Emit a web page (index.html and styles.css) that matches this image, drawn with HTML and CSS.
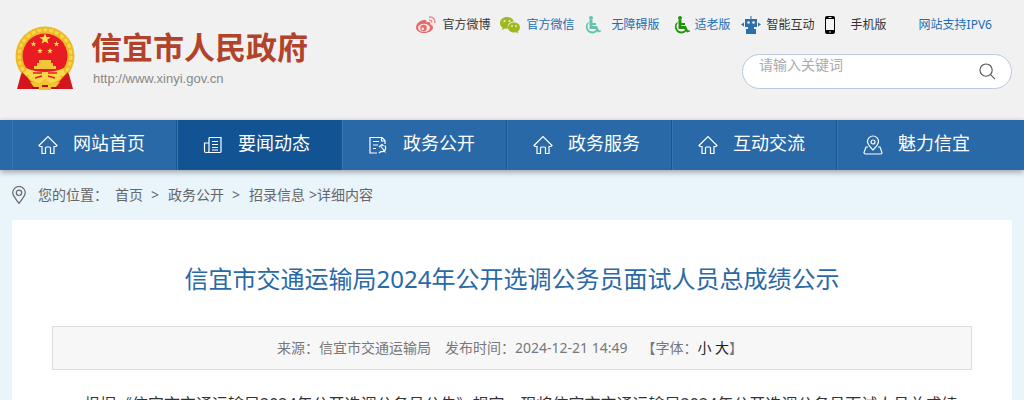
FILE: index.html
```html
<!DOCTYPE html>
<html lang="zh-CN">
<head>
<meta charset="utf-8">
<title>信宜市人民政府</title>
<link rel="stylesheet" href="styles.css">
</head>
<body>
<svg class="defs" aria-hidden="true">
  <symbol id="house" viewBox="0 0 20 20"><path d="M1 10.500 10 1.500l9 9-1 1H16V18.500h-3.500V13q0-1-1-1h-3q-1 0-1 1v5.500H4V11.500H2z"/></symbol>
  <symbol id="star" viewBox="-10 -10 20 20"><path d="M0-10 2.300-3.200 9.500-3.100 3.800 1.200 5.900 8.100 0 4-5.900 8.100-3.800 1.200-9.500-3.100-2.300-3.200z"/></symbol>
  <symbol id="wheelchair" viewBox="0 0 16 18"><circle cx="6" cy="2" r="2"/><path d="M4.500 4h3v3H11v2H7.500v1H12l2 4.500 1.500-.5.5 1.500-3 1L10.500 13H4.500z"/><path d="M3.500 7.500a5 5 0 1 0 8 6l1 1.500A6.500 6.500 0 1 1 3.500 5.800z"/></symbol>
</svg>
<header class="header">
  <div class="wrap head-row">
    <a class="brand" href="#">
      <svg class="emblem" viewBox="0 0 60 66" aria-hidden="true">
        <path d="M8 42 2 64h56l-6-22z" fill="#cf1720"/>
        <circle cx="30" cy="31" r="29.500" fill="#edb92b"/>
        <circle cx="30" cy="31" r="26" fill="none" stroke="#f9d943" stroke-width="3" stroke-dasharray="4 2"/>
        <path d="M7 47l5 5 4 5-1 7H7l1-4zM53 47l-5 5-4 5 1 7h8l-1-4z" fill="#d5151d"/>
        <circle cx="30" cy="31" r="22.500" fill="#e81c22"/>
        <g fill="#ffe14b"><use href="#star" x="24" y="8" width="12" height="12"/><use href="#star" x="15.500" y="16" width="6" height="6"/><use href="#star" x="38.500" y="16" width="6" height="6"/><use href="#star" x="22" y="23" width="6" height="6"/><use href="#star" x="32" y="23" width="6" height="6"/></g>
        <path d="M24 35h12v3h2v3h3v3H19v-3h3v-3h2z" fill="#f2c53a"/>
        <path d="M11 43q9 4 19 4t19-4v6l-8 4 3 2-8 3-6-4-6 4-8-3 3-2-8-4z" fill="#f9d94a"/>
        <path d="M18 48h9M33 48h9M20 53l7-2M40 53l-7-2" stroke="#e81c22" stroke-width="1.500"/>
        <path d="M15 57l10 1 5-4 5 4 10-1-4 5h-5v3H24v-3h-5z" fill="#f4c334"/>
        <path d="M17 63h6M37 63h6M27 61h6" stroke="#b70f17" stroke-width="2"/>
      </svg>
      <span class="brand-text"><strong class="brand-name">信宜市人民政府</strong><span class="brand-url">http://www.xinyi.gov.cn</span></span>
    </a>
    <div class="tools">
      <nav class="links" aria-label="快捷链接">
        <a class="link social" href="#"><svg class="ic20" viewBox="0 0 20 18" aria-hidden="true"><path d="M8 4C4 4 0 8 0 11.500 0 15 4 17 8 17c5 0 9-2.500 9-5.500 0-2-1.500-2.500-2.500-3 .5-2-1-3-4-2C11 4.500 10 4 8 4z" fill="#e66a69"/><ellipse cx="8" cy="11.800" rx="6" ry="4" fill="#f8e7e5"/><circle cx="7.500" cy="12" r="3.200" fill="#e66a69"/><circle cx="6.800" cy="12.700" r="1.200" fill="#fff"/><path d="M13 1.200c4-.8 6.500 2.300 5.600 6M13 4.200c2-.3 3 1 2.600 2.500" fill="none" stroke="#e88987" stroke-width="1.400"/></svg>官方微博</a>
        <a class="link social blue" href="#"><svg class="ic20" viewBox="0 0 20 18" aria-hidden="true"><path d="M7 1C3 1 0 3.500 0 7c0 2 1 3.500 2.500 4.500L2 14l3-1.500 3 .3C7 8 10 5.500 14 5.500 13 2.500 10 1 7 1z" fill="#9fba20"/><path d="M14 6.500c-3.500 0-6 2-6 5s3 5 6 5l2-.3 2 1.300-.3-2C19 14.500 20 13 20 11.500c0-3-2.500-5-6-5z" fill="#9fba20"/><g fill="#edf2cf"><circle cx="4.500" cy="5" r="1"/><circle cx="9.500" cy="5" r="1"/><circle cx="12" cy="10" r=".9"/><circle cx="16" cy="10" r=".9"/></g></svg>官方微信</a>
        <a class="link blue access" href="#"><svg class="ic16" fill="#62c3b0" aria-hidden="true"><use href="#wheelchair"/></svg>无障碍版</a>
        <a class="link blue elder" href="#"><svg class="ic16" fill="#1f9408" aria-hidden="true"><use href="#wheelchair"/></svg>适老版</a>
        <a class="link robot" href="#"><svg class="ic20" viewBox="0 0 20 18" fill="#2d6fab" aria-hidden="true"><path d="M9.500 0h1v3H16v8h-3v2h2v5H5v-5h2v-2H4V3h5.500zM0 8.500l3-2v4zM20 8.500l-3-2v4z"/><g fill="#f1f1f1"><circle cx="7.500" cy="6.500" r="1.300"/><circle cx="12.500" cy="6.500" r="1.300"/></g></svg>智能互动</a>
        <a class="link phone" href="#"><svg class="ic10" viewBox="0 0 10 18" aria-hidden="true"><rect width="10" height="18" rx="2"/><path d="M1 3h8v11H1z" fill="#f4f4f4"/><path d="M3.500 1.500h3M4 16h2" stroke="#ddd"/></svg>手机版</a>
        <a class="link blue ipv6" href="#">网站支持IPV6</a>
      </nav>
      <form class="search">
        <input class="search-input" type="text" aria-label="请输入关键词" placeholder="请输入关键词">
        <button class="search-btn" type="button" aria-label="搜索"><svg class="search-icon" viewBox="0 0 18 18" aria-hidden="true"><circle cx="7.500" cy="7.500" r="6.500"/><path d="m12 12 5 5"/></svg></button>
      </form>
    </div>
  </div>
</header>
<nav class="nav" aria-label="主导航">
  <div class="wrap nav-row">
    <a class="tab" href="#"><svg class="nav-icon" aria-hidden="true"><use href="#house"/></svg>网站首页</a>
    <a class="tab active" href="#"><svg class="nav-icon" viewBox="0 0 20 20" aria-hidden="true"><path d="M6 2.500h12v14q0 1-1 1H3q-1.500 0-1.500-1.500V8H6M6 2.500V16q0 1.500-1.500 1.500M9 6.500h6M9 9.500h6M9 12.500h6M9 15h6"/></svg>要闻动态</a>
    <a class="tab" href="#"><svg class="nav-icon" viewBox="0 0 20 20" aria-hidden="true"><path d="M9 18H2V2.500h12l3 3V9M13.500 3v3H17M5 6.500h6M5 10h5M5 13.500h3M11 12l3-2.500 1.500 1.500M13 11.500l4.500 6M17 10.500c2 4-1 7-4 6l-2 1.500"/></svg>政务公开</a>
    <a class="tab" href="#"><svg class="nav-icon" aria-hidden="true"><use href="#house"/></svg>政务服务</a>
    <a class="tab" href="#"><svg class="nav-icon" aria-hidden="true"><use href="#house"/></svg>互动交流</a>
    <a class="tab" href="#"><svg class="nav-icon" viewBox="0 0 20 20" aria-hidden="true"><path d="M10 15C6.500 11.500 4.500 9.500 4.500 6.500a5.500 5.500 0 0 1 11 0c0 3-2 5-5.500 8.500zM5 12H3l-2 5.500q0 1.500 1.500 1.500h15q1.500 0 1.500-1.500L17 12h-2"/><circle cx="10" cy="7" r="2"/></svg>魅力信宜</a>
  </div>
</nav>
<main class="wrap">
  <div class="crumbs">
    <svg class="pin" viewBox="0 0 14 18" aria-hidden="true"><path d="M7 17.300C3 12 .7 9.500.7 6.800a6.300 6.300 0 0 1 12.600 0C13.300 9.500 11 12 7 17.300z"/><circle cx="7" cy="6.800" r="2.700"/></svg>
    <span class="where">您的位置：</span>
    <a href="#">首页</a><span class="sep">&gt;</span><a href="#">政务公开</a><span class="sep">&gt;</span><a href="#">招录信息</a><span class="last">&gt;详细内容</span>
  </div>
  <article class="article">
    <h1 class="title">信宜市交通运输局2024年公开选调公务员面试人员总成绩公示</h1>
    <div class="meta"><span>来源：信宜市交通运输局</span><span>发布时间：2024-12-21 14:49</span><span>【字体：<a href="#">小</a> <a href="#">大</a>】</span></div>
    <p class="body-text">根据《信宜市交通运输局2024年公开选调公务员公告》规定，现将信宜市交通运输局2024年公开选调公务员面试人员总成绩</p>
  </article>
</main>
</body>
</html>
```
FILE: styles.css
```css
* { box-sizing: border-box; }
html { overflow: hidden; }
body {
  margin: 0;
  background: #e9f4fb;
  color: #333;
  font: 400 14px/20px "Noto Sans", "Noto Sans CJK SC", sans-serif;
}
a { color: inherit; text-decoration: none; }
svg { flex: none; }
.defs { display: block; width: 0; height: 0; }
.wrap { max-width: 1000px; margin: 0 auto; }

.header { background: #f1f1f1; height: 120px; }
.head-row { display: flex; justify-content: space-between; }
.brand { display: flex; gap: 16px; padding: 25px 0 0 3px; }
.emblem { width: 60px; height: 66px; }
.brand-text { display: flex; flex-direction: column; }
.brand-name { color: #b2432b; font-size: 31px; line-height: 44px; font-weight: 700; }
.brand-url { color: #888; font: 13px/20px "Liberation Sans", sans-serif; padding-left: 2px; }

.links { display: flex; align-items: center; padding: 15px 20px 0 0; font-size: 12px; line-height: 20px; }
.link { display: flex; align-items: center; gap: 6px; margin-left: 10px; white-space: nowrap; }
.social { gap: 7px; margin-left: 9px; }
.blue { color: #1b6db5; }
.access { gap: 11px; }
.elder { margin-left: 14px; gap: 5px; }
.phone { gap: 16px; }
.ipv6 { margin-left: 32px; }
.ic20 { width: 20px; height: 18px; }
.ic16 { width: 16px; height: 18px; }
.ic10 { width: 10px; height: 18px; }
.search {
  display: flex;
  width: 270px;
  height: 35px;
  margin: 19px 0 0 auto;
  border: 1px solid #bac8e0;
  border-radius: 18px;
  background: #fff;
}
.search-input {
  flex: 1;
  min-width: 0;
  height: 20px;
  padding: 0 0 0 16px;
  border: 0;
  background: none;
  outline: none;
  font: inherit;
}
.search-input::placeholder { color: #aaa; }
.search-btn { width: 48px; padding: 0; border: 0; background: none; }
.search-icon { display: block; width: 17px; height: 17px; margin: 0 auto; fill: none; stroke: #555; stroke-width: 1.2; }

.nav { position: relative; background: #2969a7; box-shadow: 0 2px 6px rgba(0, 0, 0, .35); }
.nav-row { display: flex; }
.tab {
  display: flex;
  gap: 15px;
  width: 165px;
  height: 50px;
  padding: 11px 0 0 26px;
  border-right: 1px solid #1b578f;
  box-shadow: inset 1px 0 #3876b1;
  color: #fff;
  font-size: 18px;
  line-height: 24px;
  white-space: nowrap;
}
.tab:last-child { border-right: 0; }
.active { background: #115393; }
.nav-icon { width: 20px; height: 20px; margin-top: 4px; fill: none; stroke: #fff; stroke-width: 1.2; }

.crumbs { display: flex; align-items: center; height: 50px; color: #666; white-space: nowrap; }
.pin { width: 14px; height: 18px; fill: none; stroke: #666; stroke-width: 1.2; }
.where { margin: 0 7px 0 12px; }
.sep { margin: 0 9px 0 8px; }
.last { margin-left: 4px; }

.article { min-height: 200px; padding: 40px 40px 0; background: #fff; }
.title { margin: 0; color: #2969a7; font-size: 24px; line-height: 38px; font-weight: 400; text-align: center; }
.meta {
  display: flex;
  justify-content: center;
  gap: 14px;
  margin-top: 28px;
  padding: 11px 4px 11px 0;
  border: 1px solid #ddd;
  background: #f7f7f7;
  color: #777;
  white-space: nowrap;
}
.meta a { color: #222; }
.body-text { margin: 18px 0 0; font-size: 16px; line-height: 32px; text-indent: 32px; }
```
